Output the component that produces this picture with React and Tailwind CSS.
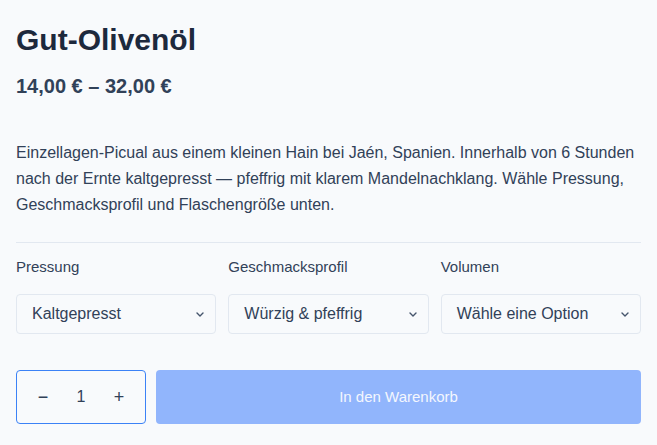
import React from 'react';

const selects = [
  { label: 'Pressung', value: 'Kaltgepresst' },
  { label: 'Geschmacksprofil', value: 'Würzig & pfeffrig' },
  { label: 'Volumen', value: 'Wähle eine Option' },
];

function Chevron() {
  return (
    <svg width="8" height="5" viewBox="0 0 8 5" fill="none" className="shrink-0 text-slate-600">
      <path d="M1 1L4 4L7 1" stroke="currentColor" strokeWidth="1.4" strokeLinecap="round" strokeLinejoin="round" />
    </svg>
  );
}

export default function App() {
  return (
    <div
      className="min-h-screen bg-[#f8fafc] px-4 pt-[22px] pb-6 text-slate-700"
      style={{ fontFamily: '"Liberation Sans", Arial, sans-serif' }}
    >
      <h1 className="text-[30px] leading-[36px] font-bold text-slate-800">Gut-Olivenöl</h1>
      <div className="mt-[14px] text-[20px] leading-[28px] font-bold text-slate-700">14,00 € – 32,00 €</div>

      <p className="mt-[40px] text-[16px] leading-[26px] text-slate-700">
        Einzellagen-Picual aus einem kleinen Hain bei Jaén, Spanien. Innerhalb von 6 Stunden nach der Ernte kaltgepresst — pfeffrig mit klarem Mandelnachklang. Wähle Pressung, Geschmacksprofil und Flaschengröße unten.
      </p>

      <div className="mt-[24px] h-px bg-slate-200" />

      <div className="mt-[14px] grid grid-cols-3 gap-3">
        {selects.map((s) => (
          <div key={s.label}>
            <div className="text-[15px] leading-[20px] text-slate-700">{s.label}</div>
            <div className="mt-[17px] h-10 flex items-center justify-between rounded border border-slate-200 pl-[15px] pr-[11px] text-[16px] text-slate-700">
              <span>{s.value}</span>
              <Chevron />
            </div>
          </div>
        ))}
      </div>

      <div className="mt-[36px] flex gap-[10px]">
        <div className="h-[54px] w-[130px] shrink-0 flex items-center px-[7px] rounded border border-[#3b82f6]">
          <button className="w-[38px] h-full flex items-center justify-center text-[18px] text-slate-700">−</button>
          <div className="w-[38px] text-center text-[16px] text-slate-700">1</div>
          <button className="w-[38px] h-full flex items-center justify-center text-[18px] text-slate-700">+</button>
        </div>
        <button className="h-[54px] flex-1 rounded bg-[#91b5fc] text-[15px] text-[#f4f7fe]">In den Warenkorb</button>
      </div>
    </div>
  );
}
